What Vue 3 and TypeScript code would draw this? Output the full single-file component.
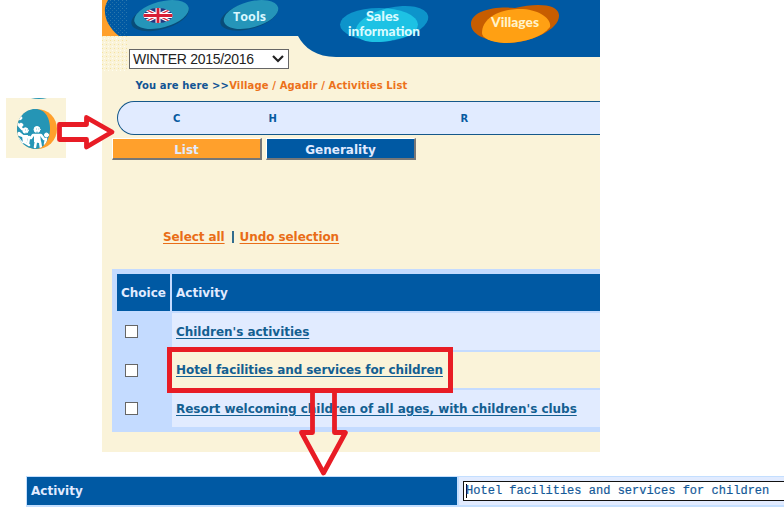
<script setup lang="ts">
import { ref } from 'vue'

interface Activity {
  label: string
  checked: boolean
}

const season = ref('WINTER 2015/2016')
const letters = ['C', 'H', 'R']
const activities = ref<Activity[]>([
  { label: "Children's activities", checked: false },
  { label: 'Hotel facilities and services for children', checked: false },
  { label: "Resort welcoming children of all ages, with children's clubs", checked: false },
])
const name = ref('Hotel facilities and services for children')
</script>

<template>
  <div class="page">
    <main class="panel">
      <svg class="banner" width="498" height="74" viewBox="0 0 498 74">
        <defs>
          <pattern id="blueDots" width="4" height="4" patternUnits="userSpaceOnUse">
            <rect width="1" height="1" fill="#2d78ad" />
            <rect x="2" y="2" width="1" height="1" fill="#2370a6" />
          </pattern>
          <pattern id="sandDots" width="4" height="4" patternUnits="userSpaceOnUse">
            <rect width="1" height="1" fill="#f5e3a0" />
            <rect x="2" y="2" width="1" height="1" fill="#fffef0" />
          </pattern>
        </defs>
        <rect width="30" height="36" fill="#ffa02c" />
        <rect y="36" width="25" height="36" fill="url(#sandDots)" />
        <path d="M6 0H498V57H234C215 57 202 48 196 36H17C7 28 2 18 3 8Q4 3 6 0Z" fill="#0059a3" />
        <path d="M6 0H25V36H17C7 28 2 18 3 8Q4 3 6 0Z" fill="url(#blueDots)" />
        <g>
          <ellipse cx="58" cy="16.500" rx="29.500" ry="13" transform="rotate(-15 58 16.500)" fill="#084c79" />
          <ellipse cx="59.500" cy="14.500" rx="28" ry="13" transform="rotate(-15 59.500 14.500)" fill="#2595b9" />
          <ellipse cx="147" cy="16" rx="29.500" ry="13" transform="rotate(-15 147 16)" fill="#084c79" />
          <ellipse cx="149" cy="14.500" rx="28" ry="13" transform="rotate(-15 149 14.500)" fill="#2595b9" />
        </g>
        <clipPath id="flag"><ellipse cx="56" cy="15.500" rx="14.500" ry="7.500" /></clipPath>
        <g clip-path="url(#flag)">
          <rect x="41" y="8" width="30" height="15" fill="#24367f" />
          <path d="M41 8L71 23M71 8L41 23" stroke="#fff" stroke-width="3.500" />
          <path d="M41 8L71 23M71 8L41 23" stroke="#d72339" stroke-width="1.200" />
          <path d="M56 8V23M41 15.500H71" stroke="#fff" stroke-width="5" />
          <path d="M56 8V23M41 15.500H71" stroke="#d71f35" stroke-width="2.800" />
        </g>
        <text x="131" y="21" textLength="33" lengthAdjust="spacingAndGlyphs" class="pill">Tools</text>
        <g>
          <ellipse cx="277" cy="24.500" rx="39" ry="16.500" fill="#0d94cb" />
          <ellipse cx="290" cy="24" rx="37" ry="16.500" transform="rotate(-13 290 24)" fill="#0d94cb" />
          <clipPath id="leftOval"><ellipse cx="277" cy="24.500" rx="39" ry="16.500" /></clipPath>
          <g clip-path="url(#leftOval)">
            <ellipse cx="290" cy="24" rx="37" ry="16.500" transform="rotate(-13 290 24)" fill="#1dc2e4" />
          </g>
          <path d="M254 34Q258 43 278 42Q300 40 313 30L298 22Z" fill="#1dc2e4" />
        </g>
        <text x="264" y="20.500" textLength="33" lengthAdjust="spacingAndGlyphs" class="oval">Sales</text>
        <text x="246" y="36" textLength="72" lengthAdjust="spacingAndGlyphs" class="oval">information</text>
        <path d="M369 24C369 12 390 6 413 8C435 3 456 4 457 15C458 30 426 44 402 43C382 40 369 34 369 24Z" fill="#c75d00" />
        <path d="M380 33C380 19 395 10 415 9C435 8 450 18 448 27C440 38 420 43 402 43C388 42 380 38 380 33Z" fill="#ffa013" />
        <text x="389" y="27" textLength="48" lengthAdjust="spacingAndGlyphs" class="oval cream">Villages</text>
      </svg>

      <div class="season">
        <span>{{ season }}</span>
        <svg width="12" height="8" viewBox="0 0 12 8"><path d="M1 1L6 6L11 1" fill="none" stroke="#222" stroke-width="2.200" /></svg>
      </div>
      <div class="crumbs">You are here &gt;&gt;<b>Village / Agadir / Activities List</b></div>
      <nav class="letters"><span v-for="l in letters" :key="l">{{ l }}</span></nav>
      <div class="tabs">
        <button class="active"><span>List</span></button>
        <button><span>Generality</span></button>
      </div>
      <div class="select"><a class="all">Select all</a><i></i><a class="undo">Undo selection</a></div>
      <section class="table">
        <div class="cell head choice">Choice</div>
        <div class="cell head">Activity</div>
        <template v-for="(a, i) in activities" :key="a.label">
          <div class="check"><input v-model="a.checked" type="checkbox" /></div>
          <div class="cell" :class="['row' + i, { alt: i === 1 }]"><a>{{ a.label }}</a></div>
        </template>
      </section>
    </main>

    <section class="detail">
      <div class="detail-label">Activity</div>
      <div class="detail-value"><div class="field"><i></i><span>{{ name }}</span></div></div>
    </section>

    <svg class="badge" width="60" height="60" viewBox="0 0 60 60">
      <rect width="60" height="60" fill="#faf3d9" />
      <path d="M25 0H41Q33 2 25 0" fill="#2595b5" />
      <circle cx="31" cy="31" r="20" fill="#ffa02c" />
      <clipPath id="globe"><path d="M29 11C40 11 44 21 44 31S38 51 30 51C19 51 11 42 11 31S19 11 29 11Z" /></clipPath>
      <g clip-path="url(#globe)">
        <rect x="10" y="10" width="35" height="42" fill="#2595b5" />
        <g fill="#fff" stroke="#fff" stroke-linecap="round" stroke-linejoin="round">
          <circle cx="31" cy="31.500" r="3" /><circle cx="19.500" cy="32.500" r="2.700" /><circle cx="40.500" cy="37" r="2" />
          <circle cx="15" cy="27" r="1.800" /><circle cx="14" cy="20" r="1.800" />
          <path fill="none" stroke-width="2.500" d="M10 24L16 31M11 36L17 38L25 40L27 37H35L38 41M31 38V43M29 49L30 43L34 44L35 50M40 41L39 46M13 35L18 39L18 44L23 47M23 39L22 46M12 40L16 45" />
          <path stroke="none" d="M28 36H34L35 44H28ZM16 37H22L21 44H17Z" />
        </g>
        <path d="M19 32h.7M21.500 32h.7M30 31h.7M32.500 31h.7M30 34q1 1 2 0M19 35q1 1 2 0" fill="none" stroke="#2595b5" stroke-width=".8" />
      </g>
    </svg>

    <svg class="marks" width="784" height="509" viewBox="0 0 784 509">
      <g fill="none" stroke="#e81c25" stroke-width="5">
        <path d="M59.500 124.500H86.500V117.500L112 132L86.500 147V139.500H59.500Z" fill="#fff" stroke-width="4.800" stroke-linejoin="round" />
        <rect x="169.500" y="349.500" width="281" height="41" />
        <path d="M312.500 393V432.500H301.500L323.500 473L345.500 432.500H334.500V393" stroke-width="4.800" stroke-linejoin="round" />
      </g>
    </svg>
  </div>
</template>

<style>
body { margin: 0; background: #fff; }
</style>

<style scoped>
.page { position: relative; width: 784px; height: 509px; overflow: hidden; font-family: "DejaVu Sans", sans-serif; font-weight: bold; font-size: 12px; color: #115e96; }
.panel { position: relative; display: flex; flex-direction: column; box-sizing: border-box; width: 498px; height: 452px; margin-left: 102px; padding-top: 49px; background: #faf3d9; }
.banner { position: absolute; left: 0; top: 0; }
.pill { font: bold 13px "Open Sans", sans-serif; fill: #d9f8ff; }
.oval { font: 900 12.500px Lato, sans-serif; fill: #d8fbff; }
.cream { fill: #fff3ca; }
.season { position: relative; display: flex; align-items: center; justify-content: space-between; box-sizing: border-box; width: 160px; height: 20px; margin-left: 27px; padding: 0 4px 0 3px; border: 1px solid #666; background: #fff; color: #222; font: 14px "Liberation Sans", sans-serif; white-space: nowrap; }
.season span { letter-spacing: -.28px; }
.crumbs { height: 32px; line-height: 33px; margin-left: 33.500px; font-size: 10px; letter-spacing: .135px; white-space: nowrap; color: #115494; }
.crumbs b { color: #ec711a; }
.letters { display: grid; grid-template-columns: 95.500px 192px 1fr; align-items: center; box-sizing: border-box; height: 34px; margin-left: 15px; padding-left: 55px; border: 1px solid #15588a; border-right: 0; border-radius: 17px 0 0 17px; background: #e1ebff; font-size: 10px; color: #075aa0; }
.tabs { display: flex; gap: 4px; margin: 3px 0 0 10px; }
button { box-sizing: border-box; width: 150px; height: 22px; padding: 0; border: 1px solid #fff; border-width: 1px 2px 2px 1px; border-right-color: #777; border-bottom-color: #777; background: #0059a3; color: #e1ebff; font: bold 12px "DejaVu Sans", sans-serif; }
button.active { background: #ffa02c; }
button span { position: relative; top: 1px; }
.select { display: flex; align-items: center; height: 16px; margin: 69px 0 0 61px; color: #e96d17; white-space: nowrap; letter-spacing: -.08px; }
.select i { width: 2px; height: 12px; margin: 0 6px 0 7px; background: #316c8e; }
a { text-decoration: underline; text-decoration-thickness: 1px; text-underline-offset: 2px; }
.table { display: grid; grid-template-columns: 53px 1fr; grid-template-rows: 37px 37px 36px 37px; gap: 2px; box-sizing: border-box; height: 163px; margin: 24px 0 0 10px; padding: 5px 0 5px 5px; background: #c4dbff; white-space: nowrap; }
.cell { display: flex; align-items: center; padding-left: 4px; background: #e1ebff; color: #145f91; }
.head { background: #0059a3; color: #e1ebff; }
.check { display: flex; align-items: center; padding-left: 8px; }
.check input { appearance: none; box-sizing: border-box; width: 13px; height: 13px; margin: 0; border: 1px solid #666; background: #fff; }
.row0, .row2 { letter-spacing: -.03px; }
.alt { background: #faf3d9; letter-spacing: -.08px; }
.detail { display: flex; box-sizing: border-box; width: 758px; height: 31px; margin: 24px 0 0 26px; padding: 1px 0 2px 1px; background: #c4dfff; gap: 2px; }
.detail-label { width: 426px; padding-left: 4px; line-height: 29px; background: #0059a3; color: #e1ebff; }
.detail-value { flex: 1; padding: 4px 0 4px 4px; background: #e1ebff; }
.field { display: flex; align-items: center; box-sizing: border-box; height: 20px; border: 1px solid #111; border-right: 0; background: #fff; padding-left: 2px; font: 12px "Liberation Mono", monospace; letter-spacing: .02px; -webkit-text-stroke: .2px #145998; color: #145998; white-space: nowrap; }
.field i { width: 1px; height: 14px; margin-right: -1px; background: #000; }
.badge { position: absolute; left: 6px; top: 98px; }
.marks { position: absolute; left: 0; top: 0; pointer-events: none; }
</style>
